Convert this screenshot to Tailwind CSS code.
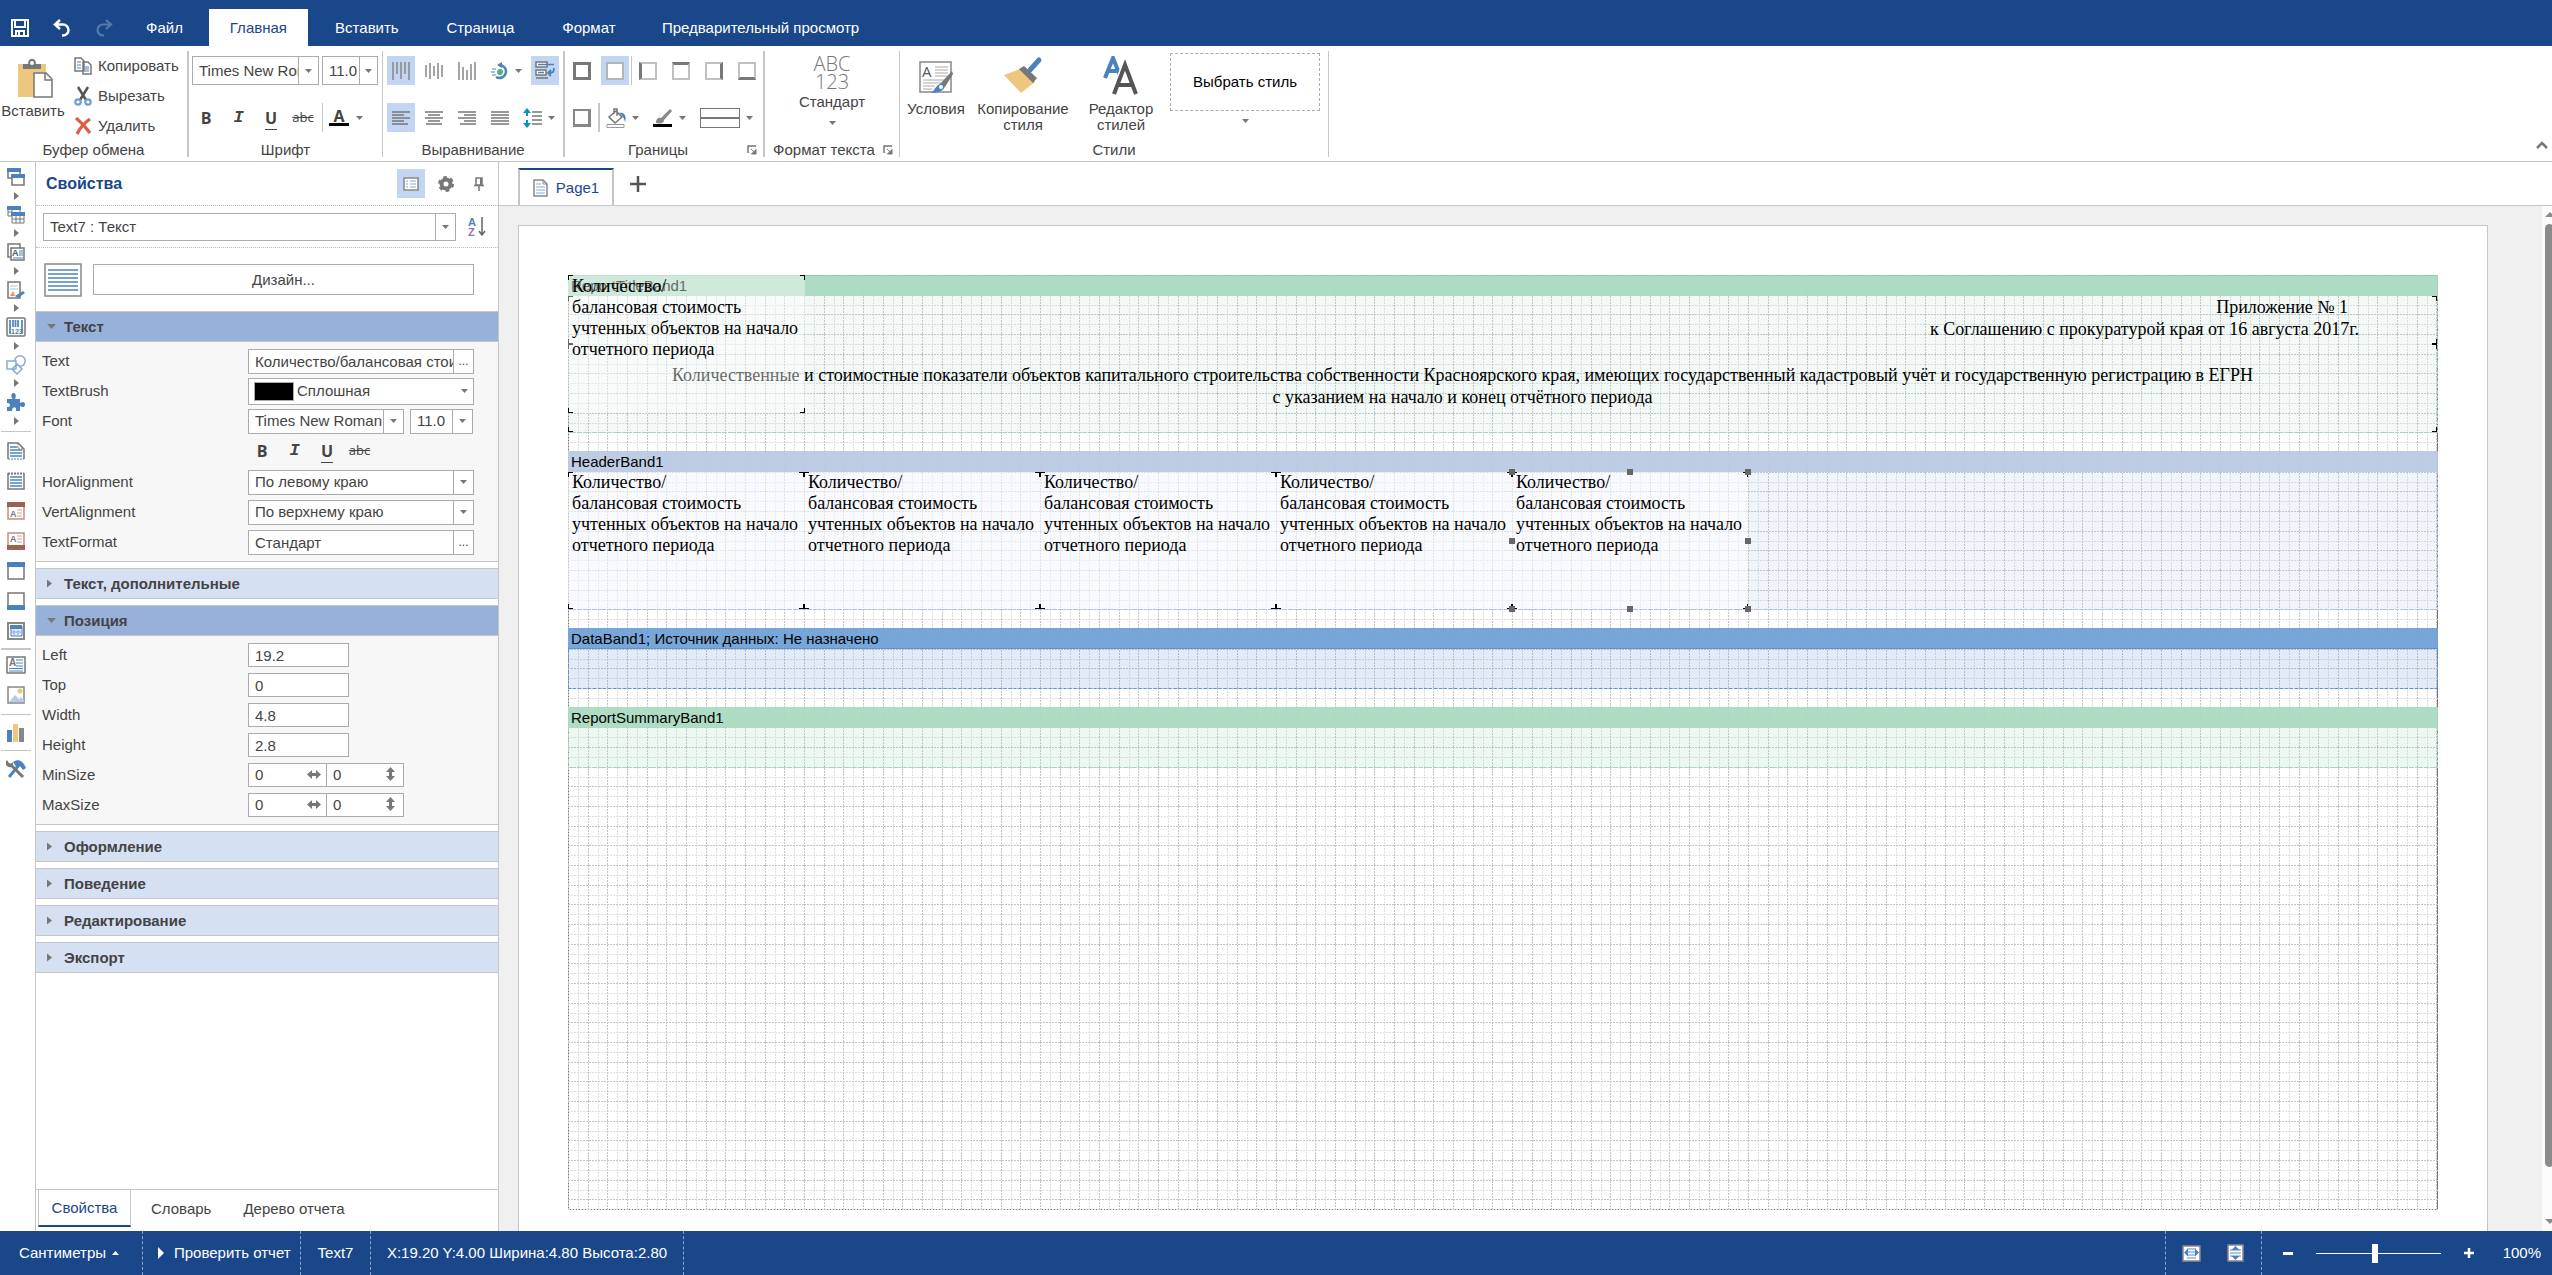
<!DOCTYPE html>
<html lang="ru">

<head>
  <meta charset="UTF-8" />
  <meta name="viewport" content="width=device-width, initial-scale=1.0" />
  <title>Дизайнер отчетов</title>
  <script src="https://cdn.jsdelivr.net/npm/@tailwindcss/browser@4"></script>
</head>

<body class="h-screen flex flex-col overflow-hidden bg-white text-[15px] leading-4 text-[#444444] font-['Liberation_Sans',Arial,sans-serif]">

  <!-- Shared icons -->
  <svg class="hidden">
    <symbol id="down" viewBox="0 0 7 4"><path d="M0 0h7L3.500 4z" fill="#777" /></symbol>
    <symbol id="right" viewBox="0 0 5 8"><path d="M0 0l5 4-5 4z" fill="#777" /></symbol>
    <symbol id="launcher" viewBox="0 0 10 10"><path d="M1 8V1h8" fill="none" stroke="#777" stroke-width="1.500" /><path d="M4 4l4 4M9 4.500V9H4.500z" fill="#777" stroke="#777" /></symbol>
    <symbol id="hsize" viewBox="0 0 14 9"><path d="M0 4.500L5 0v3h4V0l5 4.500L9 9V6H5v3z" fill="#777" /></symbol>
    <symbol id="vsize" viewBox="0 0 9 14"><path d="M4.500 0L9 5H6v4h3l-4.500 5L0 9h3V5H0z" fill="#777" /></symbol>
  </svg>

  <!-- Menu bar -->
  <header class="bg-[#1a478a] text-white flex h-[46px] pt-[9px] pl-[11px] shrink-0">
    <div class="flex items-center gap-6 w-[115px]">
      <button aria-label="Сохранить"><svg class="size-[18px]" viewBox="0 0 18 18"><path d="M1 1h16v16H1zM4 1v7h10V1M5 17v-5h8v5" fill="none" stroke="#fff" stroke-width="2" /><path d="M7 13h2v4H7z" fill="#fff" /></svg></button>
      <button aria-label="Отменить"><svg class="size-[18px]" viewBox="0 0 18 18"><path d="M7 1L2 5.500 7 10M2 5.500h8a5 5 0 010 11H9" fill="none" stroke="#fff" stroke-width="2.500" /></svg></button>
      <button aria-label="Повторить"><svg class="size-[18px]" viewBox="0 0 18 18"><path d="M11 1l5 4.500L11 10M16 5.500H8a5 5 0 000 11h1" fill="none" stroke="#5579ab" stroke-width="2.200" /></svg></button>
    </div>
    <nav class="flex">
      <a href="#" class="px-5 flex items-center">Файл</a>
      <a href="#" class="w-[99px] ml-[6px] mr-[5px] justify-center bg-white text-[#1a478a] flex items-center">Главная</a>
      <a href="#" class="w-[108px] justify-center flex items-center">Вставить</a>
      <a href="#" class="w-[119px] justify-center flex items-center">Страница</a>
      <a href="#" class="w-[98px] justify-center flex items-center">Формат</a>
      <a href="#" class="px-6 flex items-center">Предварительный просмотр</a>
    </nav>
  </header>

  <!-- Ribbon -->
  <section class="flex h-[116px] shrink-0 border-b border-[#c6c6c6] pt-[5px] pb-1">
    <!-- Clipboard -->
    <div class="w-[189px] border-r-2 border-[#c6c6c6] flex flex-col">
      <div class="flex flex-1">
        <button class="w-[66px] flex flex-col items-center pt-[7px] gap-[5px]">
          <svg class="w-9 h-10 ml-1" viewBox="0 0 36 40"><path d="M1 6h28v33H1z" fill="#eec77e" /><path d="M6 11V6h5c0-7 8-7 8 0h5v5z" fill="#777" /><circle cx="15" cy="5" r="2" fill="#fff" /><path d="M17 15h12l6 6v18H17z" fill="#fff" stroke="#777" stroke-width="1.500" /><path d="M28 15v7h7" fill="none" stroke="#777" stroke-width="1.500" /></svg>
          Вставить
        </button>
        <div class="flex flex-col pl-2 [&>button]:h-[30px]">
          <button class="flex items-center gap-[6px]">
            <svg class="size-[18px]" viewBox="0 0 18 18"><path d="M1 1h6l3 3v10H1zM9 5h5l3 3v9H9z" fill="#fff" stroke="#777" stroke-width="1.500" /><path d="M3 5h4M3 8h4M3 11h4M11 10h4M11 12h4M11 14h4" stroke="#4c82bb" stroke-width="1.200" /></svg>
            Копировать
          </button>
          <button class="flex items-center gap-[6px]">
            <svg class="w-[18px] h-5" viewBox="0 0 18 20"><path d="M4 1l8 13M14 1L6 14" stroke="#555" stroke-width="2.500" /><circle cx="4" cy="16" r="2.700" fill="none" stroke="#6f9dd0" stroke-width="2.200" /><circle cx="14" cy="16" r="2.700" fill="none" stroke="#6f9dd0" stroke-width="2.200" /></svg>
            Вырезать
          </button>
          <button class="flex items-center gap-[6px]">
            <svg class="size-[18px]" viewBox="0 0 18 18"><path d="M2 1c5 4 9 8 14 15M16 2C10 6 6 11 3 17" fill="none" stroke="#da5f43" stroke-width="3.200" /></svg>
            Удалить
          </button>
        </div>
      </div>
      <div class="text-center h-[14px] leading-[14px]">Буфер обмена</div>
    </div>

    <!-- Font -->
    <div class="w-[194px] border-r border-[#c6c6c6] flex flex-col">
      <div class="flex-1 pt-[5px] pl-[3px] flex flex-col gap-[18px]">
        <div class="flex gap-[3px]">
          <div class="flex w-[127px] h-[29px] border border-[#ababab]">
            <select aria-label="Шрифт" class="appearance-none w-[105px] pl-[6px] text-clip overflow-hidden"><option>Times New Roman</option></select>
            <span class="flex-1 border-l border-[#ababab] grid place-items-center"><svg class="w-[7px] h-1"><use href="#down" /></svg></span>
          </div>
          <div class="flex w-14 h-[29px] border border-[#ababab]">
            <select aria-label="Размер шрифта" class="appearance-none w-[36px] pl-[6px]"><option>11.0</option></select>
            <span class="flex-1 border-l border-[#ababab] grid place-items-center"><svg class="w-[7px] h-1"><use href="#down" /></svg></span>
          </div>
        </div>
        <div class="flex h-[29px] items-center font-['Open_Sans',sans-serif] text-base">
          <button class="w-7 font-bold">B</button>
          <button class="w-[37px] italic font-bold font-['Liberation_Mono',monospace] text-[17px]">I</button>
          <button class="w-7 font-bold"><span class="border-b border-[#444]">U</span></button>
          <button class="w-[36px] text-[13px] line-through">abc</button>
          <span class="w-px h-full bg-[#c6c6c6] ml-px"></span>
          <button class="flex items-center gap-[7px] ml-[6px]" aria-label="Цвет текста">
            <span class="w-5 h-4 border-b-3 border-black font-bold leading-[13px]">A</span>
            <svg class="w-[7px] h-1"><use href="#down" /></svg>
          </button>
        </div>
      </div>
      <div class="text-center h-[14px] leading-[14px]">Шрифт</div>
    </div>

    <!-- Alignment -->
    <div class="w-[182px] border-r-2 border-[#c6c6c6] flex flex-col">
      <div class="flex-1 pt-[5px] pl-1 flex flex-col gap-[18px] [&_button]:h-[29px] [&_button]:w-7 [&_button]:grid [&_button]:place-items-center">
        <div class="flex items-center gap-[5px]">
          <button class="bg-[#c2d5f2]" aria-label="По верхнему краю"><svg class="size-[18px]" viewBox="0 0 18 18"><path d="M1 0v18M5 0v12M9 0v17M13 0v12M17 0v18" stroke="#888" stroke-width="1.500" /></svg></button>
          <button aria-label="По середине"><svg class="size-[18px]" viewBox="0 0 18 18"><path d="M1 3v12M5 1v16M9 4v10M13 1v16M17 3v12" stroke="#888" stroke-width="1.500" /></svg></button>
          <button aria-label="По нижнему краю"><svg class="size-[18px]" viewBox="0 0 18 18"><path d="M1 0v18M5 5v13M9 8v10M13 2v16M17 0v18" stroke="#888" stroke-width="1.500" /></svg></button>
          <button aria-label="Угол"><svg class="size-[18px]" viewBox="0 0 18 18"><path d="M8 3a6.500 6.500 0 11-3 12" fill="none" stroke="#4c82bb" stroke-width="2.500" /><path d="M6 3l5-3v6z" fill="#4c82bb" /><circle cx="9" cy="10" r="3" fill="#53ae8a" /><path d="M1 7h4M0 10h4M1 13h4" stroke="#4c82bb" /></svg></button>
          <svg class="w-[7px] h-1 -ml-1"><use href="#down" /></svg>
          <button class="bg-[#c2d5f2] ml-1" aria-label="Перенос слов"><svg class="size-5" viewBox="0 0 20 20"><path d="M1 1h11v5H1zM1 9h10v5H1zM1 17h12" fill="#fff" stroke="#777" stroke-width="1.500" /><path d="M3 3.500h16M3 11.500h6" stroke="#4c82bb" stroke-width="1.500" /><path d="M19 7c0 4-1 5-6 5M16 9l-3 3 3 3" fill="none" stroke="#4c82bb" stroke-width="1.800" /></svg></button>
        </div>
        <div class="flex items-center gap-[5px]">
          <button class="bg-[#c2d5f2]" aria-label="Влево"><svg class="w-[18px] h-[14px]" viewBox="0 0 18 14"><path d="M0 1h18M0 4h12M0 7h18M0 10h12M0 13h16" stroke="#777" stroke-width="1.300" /></svg></button>
          <button aria-label="По центру"><svg class="w-[18px] h-[14px]" viewBox="0 0 18 14"><path d="M0 1h18M3 4h12M0 7h18M3 10h12M1 13h16" stroke="#777" stroke-width="1.300" /></svg></button>
          <button aria-label="Вправо"><svg class="w-[18px] h-[14px]" viewBox="0 0 18 14"><path d="M0 1h18M6 4h12M0 7h18M6 10h12M2 13h16" stroke="#777" stroke-width="1.300" /></svg></button>
          <button aria-label="По ширине"><svg class="w-[18px] h-[14px]" viewBox="0 0 18 14"><path d="M0 1h18M0 4h18M0 7h18M0 10h18M0 13h18" stroke="#777" stroke-width="1.300" /></svg></button>
          <button aria-label="Интервал"><svg class="size-5" viewBox="0 0 20 20"><path d="M4 4v4M4 12v4" stroke="#148cbc" stroke-width="2" /><path d="M0 5l4-5 4 5zM0 15l4 5 4-5z" fill="#148cbc" /><path d="M9 4h10M9 8h10M9 12h10M9 16h10" stroke="#777" stroke-width="1.300" /></svg></button>
          <svg class="w-[7px] h-1 -ml-1"><use href="#down" /></svg>
        </div>
      </div>
      <div class="text-center h-[14px] leading-[14px]">Выравнивание</div>
    </div>

    <!-- Borders -->
    <div class="w-[200px] border-r-2 border-[#c6c6c6] flex flex-col">
      <div class="flex-1 pt-[5px] pl-[3px] flex flex-col gap-[18px] [&_button]:h-[29px] [&_button]:min-w-7 [&_button]:grid [&_button]:place-items-center">
        <div class="flex items-center gap-[5px]">
          <button aria-label="Все границы"><span class="size-[18px] border-3 border-[#777]"></span></button>
          <button class="bg-[#c2d5f2]" aria-label="Без границ"><span class="size-[18px] border-2 border-[#b5b5b5] bg-white"></span></button>
          <span class="w-px h-[29px] bg-[#c6c6c6] -mx-[3px]"></span>
          <button aria-label="Левая граница"><span class="size-[18px] border-2 border-[#c0c0c0] border-l-3 border-l-[#777]"></span></button>
          <button aria-label="Верхняя граница"><span class="size-[18px] border-2 border-[#c0c0c0] border-t-3 border-t-[#777]"></span></button>
          <button aria-label="Правая граница"><span class="size-[18px] border-2 border-[#c0c0c0] border-r-3 border-r-[#777]"></span></button>
          <button aria-label="Нижняя граница"><span class="size-[18px] border-2 border-[#c0c0c0] border-b-3 border-b-[#777]"></span></button>
        </div>
        <div class="flex items-center">
          <button aria-label="Тень"><span class="size-[18px] border-2 border-[#888] border-r-3 border-b-3"></span></button>
          <span class="w-[2px] h-[29px] bg-[#c6c6c6] mx-[2px]"></span>
          <button aria-label="Заливка"><svg class="size-5" viewBox="0 0 20 20"><path d="M3 9l7-6 6 6-7 6zM8 6V1h3v7" fill="#fff" stroke="#777" stroke-width="1.500" /><path d="M13 5c5-1 8 3 6 9-1-4-2-6-6-9z" fill="#4c82bb" /><path d="M1 16.500h17v3H1z" fill="#fff" stroke="#999" /></svg></button>
          <svg class="w-[7px] h-1 ml-[2px]"><use href="#down" /></svg>
          <button class="ml-[10px]" aria-label="Цвет границы"><svg class="size-5" viewBox="0 0 20 20"><path d="M3 15c0-5 3-6 5-5l9-9 2 2-8 9c0 3-3 4-8 3z" fill="#888" /><path d="M0 16h19v3H0z" fill="#000" /></svg></button>
          <svg class="w-[7px] h-1 ml-[2px]"><use href="#down" /></svg>
          <button class="ml-[14px]" aria-label="Стиль границы"><span class="w-10 h-5 border border-[#777] grid items-center"><span class="h-[2px] bg-[#777]"></span></span></button>
          <svg class="w-[7px] h-1 ml-[6px]"><use href="#down" /></svg>
        </div>
      </div>
      <div class="flex items-center h-[14px]"><span class="flex-1 pl-1 text-center">Границы</span><svg class="size-[10px] mr-[6px]"><use href="#launcher" /></svg></div>
    </div>

    <!-- Text format -->
    <div class="w-[135px] border-r border-[#c6c6c6] flex flex-col">
      <button class="flex-1 flex flex-col items-center pt-1">
        <span class="font-['Open_Sans','Noto_Sans',sans-serif] font-light text-xl leading-[18px] text-[#777]">ABC<br>123</span>
        <span class="mt-[3px]">Стандарт</span>
        <svg class="w-[7px] h-1 mt-[11px]"><use href="#down" /></svg>
      </button>
      <div class="flex items-center h-[14px]"><span class="flex-1 text-center">Формат текста</span><svg class="size-[10px] mr-[6px]"><use href="#launcher" /></svg></div>
    </div>

    <!-- Styles -->
    <div class="w-[429px] border-r border-[#c6c6c6] flex flex-col">
      <div class="flex-1 flex items-start">
        <button class="w-[72px] flex flex-col items-center pt-[5px] gap-[5px]">
          <svg class="size-10" viewBox="0 0 40 40"><path d="M4 6h31v30H4z" fill="#fff" stroke="#888" stroke-width="1.500" /><text x="6" y="21" font-size="15" font-family="Open Sans" fill="#555">A</text><path d="M19 11h13M19 14h13M19 17h13M19 20h13M7 24h25M7 27h18M7 30h12M7 33h9" stroke="#aaa" /><path d="M24 28L36 15l1 3-8 13z" fill="#777" /><path d="M28 28c3 5-4 9-13 9 5-4 6-11 13-9z" fill="#4c82bb" /><circle cx="25" cy="31" r="2" fill="#fff" /></svg>
          Условия
        </button>
        <button class="w-[102px] flex flex-col items-center pt-[5px] gap-[5px]">
          <svg class="size-10" viewBox="0 0 40 40"><path d="M1 19l16-6 15 13-14 11z" fill="#eec77e" /><path d="M16 13l5-3 13 12-4 5z" fill="#777" /><path d="M27 14l9-10" stroke="#4c82bb" stroke-width="5" stroke-linecap="round" /></svg>
          <span>Копирование<br>стиля</span>
        </button>
        <button class="w-[94px] flex flex-col items-center pt-[5px] gap-[5px]">
          <svg class="size-10" viewBox="0 0 40 40"><path d="M4 22L12 2l8 20M7 15h10" fill="none" stroke="#4c82bb" stroke-width="4" /><path d="M13 38L24 9l11 29M17 29h14" fill="none" stroke="#fff" stroke-width="7" /><path d="M13 38L24 9l11 29M17 29h14" fill="none" stroke="#555" stroke-width="4" /></svg>
          <span>Редактор<br>стилей</span>
        </button>
        <button class="w-[150px] ml-[2px] mt-[2px] flex flex-col items-center text-black">
          <span class="w-full h-[58px] border border-dashed border-[#ababab] grid place-items-center">Выбрать стиль</span>
          <svg class="w-[7px] h-1 mt-2"><use href="#down" /></svg>
        </button>
      </div>
      <div class="text-center h-[14px] leading-[14px]">Стили</div>
    </div>
    <button class="ml-auto self-end mr-1 mb-2" aria-label="Свернуть ленту"><svg class="w-3 h-2" viewBox="0 0 12 8"><path d="M1 7l5-5 5 5" fill="none" stroke="#777" stroke-width="2.500" /></svg></button>
  </section>

  <div class="flex flex-1 min-h-0">
    <!-- Toolbox -->
    <aside class="w-[35px] shrink-0 flex flex-col items-start pl-1 pt-[5px]">
      <div class="flex flex-col items-center justify-between h-[258px] w-6 [&>button]:h-5">
        <button aria-label="Бэнды"><svg class="size-[18px]" viewBox="0 0 18 18"><path d="M1 1h12v9H1z" fill="#fff" stroke="#777" stroke-width="1.500" /><path d="M0 0h14v4H0z" fill="#4c82bb" /><path d="M5 7h12v10H5z" fill="#fff" stroke="#777" stroke-width="1.500" /><path d="M4 6h14v4H4z" fill="#4c82bb" /></svg></button>
        <svg class="w-[5px] h-2"><use href="#right" /></svg>
        <button aria-label="Перекрестные бэнды"><svg class="size-[18px]" viewBox="0 0 18 18"><path d="M1 1h12v9H1zM5 1v9M1 6h4" fill="#fff" stroke="#777" /><path d="M0 0h14v4H0z" fill="#4c82bb" /><path d="M5 7h12v10H5zM9 7v10M13 7v10M5 13h12" fill="#fff" stroke="#777" /><path d="M4 6h14v4H4z" fill="#4c82bb" /></svg></button>
        <svg class="w-[5px] h-2"><use href="#right" /></svg>
        <button aria-label="Компоненты"><svg class="size-[18px]" viewBox="0 0 18 18"><path d="M1 1h12v13H1z" fill="#fff" stroke="#777" stroke-width="1.500" /><path d="M4 5h13v12H4z" fill="#fff" stroke="#777" stroke-width="1.500" /><text x="5" y="13" font-size="9" font-weight="bold" fill="#555">A</text><path d="M12 8h4M12 10h4M12 12h4M6 15h10" stroke="#4c82bb" /></svg></button>
        <svg class="w-[5px] h-2"><use href="#right" /></svg>
        <button aria-label="Подпись"><svg class="size-[18px]" viewBox="0 0 18 18"><path d="M1 1h12v16H1z" fill="#fff" stroke="#777" stroke-width="1.500" /><path d="M3 5h8M3 8h8" stroke="#a9c5e5" /><path d="M3 15l3-5 2 5z" fill="#e8935c" /><path d="M8 15l8-5 2 2-7 5z" fill="#4c82bb" /></svg></button>
        <svg class="w-[5px] h-2"><use href="#right" /></svg>
        <button aria-label="Штрих-коды"><svg class="size-[20px]" viewBox="0 0 20 20"><rect x="1" y="1" width="18" height="18" rx="1" fill="#fff" stroke="#777" stroke-width="1.500" /><path d="M4 3v14M7 3v7M9.500 3v7M12 3v7M16 3v14" stroke="#4c82bb" stroke-width="1.700" /><text x="5" y="17" font-size="7" font-weight="bold" fill="#4c82bb">123</text></svg></button>
        <svg class="w-[5px] h-2"><use href="#right" /></svg>
        <button aria-label="Фигуры"><svg class="size-[20px]" viewBox="0 0 20 20"><g fill="#fff" stroke="#86abd6" stroke-width="1.500"><circle cx="14" cy="6" r="5.200" /><path d="M1 6h9v8H1zM11 9l5 5-5 5-5-5z" /></g></svg></button>
        <svg class="w-[5px] h-2"><use href="#right" /></svg>
        <button aria-label="Расширения"><svg class="size-[18px]" viewBox="0 0 18 18"><path d="M0 6h5.500C3 2 5 0 6.500 0S10 2 8 6h5v4c3-2 5-1 5 1.500S16 15 13 13v5H9c1-5-4-5-4 0H0v-4c4 1 4-5 0-4z" fill="#4c82bb" /></svg></button>
        <svg class="w-[5px] h-2"><use href="#right" /></svg>
      </div>
      <hr class="w-[30px] -ml-[3px] border-[#c6c6c6] mt-[6px] mb-1" />
      <div class="flex flex-col items-center w-6 [&>button]:h-[30px]">
        <button aria-label="Заголовок отчета"><svg class="size-[18px]" viewBox="0 0 18 18"><path d="M1 17V1h10l6 6v10" fill="#fff" stroke="#777" stroke-width="1.500" /><path d="M11 1v6h6M1 17h16" fill="none" stroke="#777" stroke-dasharray="2 1" /><path d="M3 5h7M3 8h12M3 11h12M3 14h12" stroke="#4c82bb" stroke-width="1.500" /></svg></button>
        <button aria-label="Итог отчета"><svg class="size-[18px]" viewBox="0 0 18 18"><path d="M1 1v16h16V1" fill="#fff" stroke="#777" stroke-width="1.500" /><path d="M1 1.500h16" stroke="#777" stroke-width="2" stroke-dasharray="2 1" /><path d="M3 5h12M3 8h12M3 11h12M3 14h12" stroke="#4c82bb" stroke-width="1.500" /></svg></button>
        <button aria-label="Заголовок страницы"><svg class="size-[18px]" viewBox="0 0 18 18"><path d="M1 1h16v16H1z" fill="#fff" stroke="#c38f80" stroke-width="1.500" /><path d="M0 0h18v5H0z" fill="#a06250" /><text x="3" y="15" font-size="9" font-weight="bold" fill="#777">A</text><path d="M10 8h5M10 11h5M10 14h5" stroke="#d0a598" /></svg></button>
        <button aria-label="Итог страницы"><svg class="size-[18px]" viewBox="0 0 18 18"><path d="M1 1h16v16H1z" fill="#fff" stroke="#c38f80" stroke-width="1.500" /><path d="M0 13h18v5H0z" fill="#a06250" /><text x="3" y="10" font-size="9" font-weight="bold" fill="#777">A</text><path d="M10 4h5M10 7h5M10 10h5" stroke="#d0a598" /></svg></button>
        <button aria-label="Заголовок"><svg class="size-[18px]" viewBox="0 0 18 18"><path d="M1 1h16v16H1z" fill="#fff" stroke="#777" stroke-width="1.500" /><path d="M0 0h18v5H0z" fill="#4c82bb" /></svg></button>
        <button aria-label="Итог"><svg class="size-[18px]" viewBox="0 0 18 18"><path d="M1 1h16v16H1z" fill="#fff" stroke="#777" stroke-width="1.500" /><path d="M0 13h18v5H0z" fill="#4c82bb" /></svg></button>
        <button aria-label="Данные"><svg class="size-[18px]" viewBox="0 0 18 18"><path d="M1 1h16v16H1z" fill="#fff" stroke="#888" stroke-width="2" /><path d="M4 4h11v10H4z" fill="#e4edf7" stroke="#4c82bb" /><path d="M3 3h12v4H3z" fill="#4c82bb" /><path d="M4 10h10M7 8v5M11 8v5" stroke="#86abd6" /></svg></button>
      </div>
      <hr class="w-[30px] -ml-[3px] border-[#c6c6c6] border-t-2 mt-[2px]" />
      <div class="flex flex-col items-center w-6 [&>button]:h-[30px]">
        <button aria-label="Текст"><svg class="w-5 h-[18px]" viewBox="0 0 20 18"><path d="M1 1h18v16H1z" fill="#fff" stroke="#777" stroke-width="1.500" /><text x="3" y="10" font-size="10" font-weight="bold" fill="#777">A</text><path d="M10 4h7M10 7h7M10 10h7M3 12.500h14M3 15h14" stroke="#4c82bb" /></svg></button>
        <button aria-label="Изображение"><svg class="size-[18px]" viewBox="0 0 18 18"><path d="M1 1h16v16H1z" fill="#fff" stroke="#888" stroke-width="1.500" /><circle cx="13" cy="5" r="2.500" fill="#eec77e" /><path d="M2 16l6-7 4 4 2-2 3 3v2z" fill="#b6cce6" /></svg></button>
      </div>
      <hr class="w-[30px] -ml-[3px] border-[#c6c6c6] mt-1 mb-[3px]" />
      <button class="w-6 h-[30px] grid place-items-center" aria-label="Диаграмма"><svg class="size-[18px]" viewBox="0 0 18 18"><path d="M0 6h5v12H0z" fill="#4c82bb" /><path d="M6 0h5v18H6z" fill="#eec77e" /><path d="M12 4h5v14h-5z" fill="#888" /></svg></button>
      <hr class="w-[30px] -ml-[3px] border-[#c6c6c6] mt-[2px] mb-[3px]" />
      <button class="w-6 h-[30px] grid place-items-center" aria-label="Настройка"><svg class="size-5" viewBox="0 0 20 20"><path d="M3 18L13 6" stroke="#4c82bb" stroke-width="3" /><path d="M7 3c6-4 10-1 13 6l-3 2-3-4-3 2z" fill="#4c82bb" /><path d="M4 5l13 13" stroke="#777" stroke-width="3" /><path d="M1 1a4 4 0 106 6L7 3 5 5 3 4z" fill="#777" /></svg></button>
    </aside>

    <!-- Properties panel -->
    <section class="w-[464px] shrink-0 border-x border-[#c6c6c6] flex flex-col">
      <div class="h-[44px] flex items-center pl-[10px] pr-[10px] border-b border-dotted border-[#bbb]">
        <h2 class="font-bold text-base text-[#1a478a] flex-1">Свойства</h2>
        <button class="w-7 h-[29px] bg-[#c2d5f2] grid place-items-center" aria-label="Вид"><svg class="w-4 h-[14px]" viewBox="0 0 16 14"><path d="M1 1h14v12H1z" fill="#fff" stroke="#888" stroke-width="1.500" /><path d="M3 4h2M3 7h2M3 10h2M7 4h6M7 7h6M7 10h6" stroke="#86abd6" /></svg></button>
        <button class="ml-[13px]" aria-label="Настройки"><svg class="size-4" viewBox="0 0 16 16"><circle cx="8" cy="8" r="4.500" fill="none" stroke="#777" stroke-width="4" /><circle cx="8" cy="8" r="6.500" fill="none" stroke="#777" stroke-width="3" stroke-dasharray="3.400 3.400" /></svg></button>
        <button class="ml-5 mr-1" aria-label="Закрепить"><svg class="w-[10px] h-[14px]" viewBox="0 0 10 14"><path d="M2 1h6v7H2zM0 8.500h10M5 9v5" fill="none" stroke="#777" stroke-width="1.500" /><path d="M7 1v7" stroke="#777" stroke-width="2" /></svg></button>
      </div>
      <div class="h-[42px] flex items-center pl-[7px] border-b border-dotted border-[#bbb]">
        <div class="flex w-[413px] h-7 border border-[#ababab]">
          <select aria-label="Компонент" class="appearance-none flex-1 pl-[6px]"><option>Text7 : Текст</option></select>
          <span class="w-5 border-l border-[#ababab] grid place-items-center"><svg class="w-[7px] h-1"><use href="#down" /></svg></span>
        </div>
        <button class="ml-3" aria-label="Сортировка"><svg class="w-[18px] h-5" viewBox="0 0 18 20"><text x="0" y="9" font-size="11" font-weight="bold" fill="#4c82bb">A</text><text x="0" y="19" font-size="11" font-weight="bold" fill="#9b6fc0">Z</text><path d="M14 0v17M11 14l3 4 3-4" fill="none" stroke="#666" stroke-width="1.500" /></svg></button>
      </div>
      <div class="flex items-center h-[63px] pl-2 gap-[11px]">
        <svg class="w-[38px] h-[34px]" viewBox="0 0 38 34"><path d="M1 1h36v32H1z" fill="#fff" stroke="#888" stroke-width="1.500" /><path d="M4 7h30M4 11h30M4 15h30M4 19h30M4 23h30M4 27h30" stroke="#4c82bb" stroke-width="1.400" /></svg>
        <button class="w-[381px] h-[31px] border border-[#ababab]">Дизайн...</button>
      </div>

      <div class="flex flex-col flex-1 [&_h3]:font-bold [&_h3]:h-[31px] [&_h3]:border-y [&_h3]:border-[#c6c6c6] [&_h3]:flex [&_h3]:items-center [&_h3]:pl-[11px] [&_label]:w-[206px] [&_label]:shrink-0">
        <h3 class="bg-[#98b1db]"><svg class="w-[9px] h-[5px] mr-2"><use href="#down" /></svg>Текст</h3>
        <div class="bg-[#f7f7f7] border-b border-[#c6c6c6] py-1 pl-[6px] [&>div]:h-[30px] [&>div]:flex [&>div]:items-center">
          <div>
            <label for="p-text">Text</label>
            <input id="p-text" value="Количество/балансовая стоимость учтенных объектов на начало отчетного периода" class="w-[206px] h-[25px] bg-white border border-[#ababab] pl-[6px]" />
            <button class="w-5 h-[25px] bg-white border border-l-0 border-[#ababab] text-xs">...</button>
          </div>
          <div>
            <label for="p-brush">TextBrush</label>
            <div class="flex items-center w-[226px] h-[27px] bg-white border border-[#ababab] pl-[5px] pr-[5px]">
              <span class="w-10 h-[19px] bg-black border border-[#ababab]"></span>
              <select id="p-brush" class="appearance-none flex-1 pl-[3px]"><option>Сплошная</option></select>
              <svg class="w-[7px] h-1"><use href="#down" /></svg>
            </div>
          </div>
          <div>
            <label for="p-font">Font</label>
            <div class="flex w-[156px] h-[25px] bg-white border border-[#ababab]">
              <select id="p-font" class="appearance-none flex-1 pl-[6px]"><option>Times New Roman</option></select>
              <span class="w-5 border-l border-[#ababab] grid place-items-center"><svg class="w-[7px] h-1"><use href="#down" /></svg></span>
            </div>
            <div class="flex w-[63px] h-[25px] bg-white border border-[#ababab] ml-[6px]">
              <select aria-label="Размер" class="appearance-none flex-1 w-10 pl-[6px]"><option>11.0</option></select>
              <span class="w-5 border-l border-[#ababab] grid place-items-center"><svg class="w-[7px] h-1"><use href="#down" /></svg></span>
            </div>
          </div>
          <div class="pl-[206px] font-['Open_Sans',sans-serif] text-base">
            <button class="w-7 font-bold">B</button>
            <button class="w-[37px] italic font-bold font-['Liberation_Mono',monospace] text-[17px]">I</button>
            <button class="w-7 font-bold"><span class="border-b border-[#444]">U</span></button>
            <button class="w-[37px] text-[13px] line-through">abc</button>
          </div>
          <div class="mt-px">
            <label for="p-hor">HorAlignment</label>
            <div class="flex w-[226px] h-[25px] bg-white border border-[#ababab]">
              <select id="p-hor" class="appearance-none flex-1 pl-[6px]"><option>По левому краю</option></select>
              <span class="w-5 border-l border-[#ababab] grid place-items-center"><svg class="w-[7px] h-1"><use href="#down" /></svg></span>
            </div>
          </div>
          <div>
            <label for="p-vert">VertAlignment</label>
            <div class="flex w-[226px] h-[25px] bg-white border border-[#ababab]">
              <select id="p-vert" class="appearance-none flex-1 pl-[6px]"><option>По верхнему краю</option></select>
              <span class="w-5 border-l border-[#ababab] grid place-items-center"><svg class="w-[7px] h-1"><use href="#down" /></svg></span>
            </div>
          </div>
          <div>
            <label for="p-format">TextFormat</label>
            <input id="p-format" value="Стандарт" class="w-[206px] h-[25px] bg-white border border-[#ababab] pl-[6px]" />
            <button class="w-5 h-[25px] bg-white border border-l-0 border-[#ababab] text-xs">...</button>
          </div>
        </div>

        <h3 class="bg-[#d5e0f2] mt-[6px]"><svg class="w-[5px] h-[9px] mr-3"><use href="#right" /></svg>Текст, дополнительные</h3>
        <h3 class="bg-[#98b1db] mt-[6px]"><svg class="w-[9px] h-[5px] mr-2"><use href="#down" /></svg>Позиция</h3>
        <div class="bg-[#f7f7f7] border-b border-[#c6c6c6] py-1 pl-[6px] [&>div]:h-[30px] [&>div]:flex [&>div]:items-center">
          <div><label for="p-left">Left</label><input id="p-left" value="19.2" class="w-[101px] h-6 bg-white border border-[#ababab] pl-[6px]" /></div>
          <div><label for="p-top">Top</label><input id="p-top" value="0" class="w-[101px] h-6 bg-white border border-[#ababab] pl-[6px]" /></div>
          <div><label for="p-width">Width</label><input id="p-width" value="4.8" class="w-[101px] h-6 bg-white border border-[#ababab] pl-[6px]" /></div>
          <div><label for="p-height">Height</label><input id="p-height" value="2.8" class="w-[101px] h-6 bg-white border border-[#ababab] pl-[6px]" /></div>
          <div>
            <label for="p-min">MinSize</label>
            <div class="flex h-6 bg-white border border-[#ababab]">
              <input id="p-min" value="0" class="w-[58px] pl-[6px]" /><svg class="w-[14px] h-[9px] mt-[6px] mr-[5px]"><use href="#hsize" /></svg>
              <input aria-label="MinSize высота" value="0" class="w-[60px] pl-[6px] border-l border-[#ababab]" /><svg class="w-[9px] h-[14px] mt-[3px] mr-2"><use href="#vsize" /></svg>
            </div>
          </div>
          <div>
            <label for="p-max">MaxSize</label>
            <div class="flex h-6 bg-white border border-[#ababab]">
              <input id="p-max" value="0" class="w-[58px] pl-[6px]" /><svg class="w-[14px] h-[9px] mt-[6px] mr-[5px]"><use href="#hsize" /></svg>
              <input aria-label="MaxSize высота" value="0" class="w-[60px] pl-[6px] border-l border-[#ababab]" /><svg class="w-[9px] h-[14px] mt-[3px] mr-2"><use href="#vsize" /></svg>
            </div>
          </div>
        </div>

        <h3 class="bg-[#d5e0f2] mt-[6px]"><svg class="w-[5px] h-[9px] mr-3"><use href="#right" /></svg>Оформление</h3>
        <h3 class="bg-[#d5e0f2] mt-[6px]"><svg class="w-[5px] h-[9px] mr-3"><use href="#right" /></svg>Поведение</h3>
        <h3 class="bg-[#d5e0f2] mt-[6px]"><svg class="w-[5px] h-[9px] mr-3"><use href="#right" /></svg>Редактирование</h3>
        <h3 class="bg-[#d5e0f2] mt-[6px]"><svg class="w-[5px] h-[9px] mr-3"><use href="#right" /></svg>Экспорт</h3>
      </div>

      <nav class="flex h-[42px] border-t border-[#c6c6c6] pl-[2px] pb-1">
        <a href="#" class="w-[93px] border-x border-x-[#c6c6c6] border-b-2 border-b-[#1a478a] text-[#1a478a] grid place-items-center">Свойства</a>
        <a href="#" class="px-5 grid place-items-center">Словарь</a>
        <a href="#" class="px-3 grid place-items-center">Дерево отчета</a>
      </nav>
    </section>

    <!-- Designer -->
    <main class="flex-1 min-w-0 flex flex-col">
      <div class="h-11 shrink-0 border-b border-[#c6c6c6] flex pt-[6px] pl-[19px]">
        <a href="#" class="w-24 border-x-2 border-x-[#c6c6c6] border-t-2 border-t-[#1a478a] text-[#1a478a] flex items-center justify-center gap-2">
          <svg class="w-[15px] h-[18px]" viewBox="0 0 15 18"><path d="M1 1h9l4 4v12H1z" fill="#fff" stroke="#888" stroke-width="1.500" /><path d="M10 1v4h4" fill="none" stroke="#888" /><path d="M3 5h5M3 8h9M3 11h9M3 14h9" stroke="#86abd6" /></svg>
          Page1
        </a>
        <button class="ml-4 mb-[6px]" aria-label="Новая страница"><svg class="size-4" viewBox="0 0 16 16"><path d="M8 0v16M0 8h16" stroke="#555" stroke-width="2.500" /></svg></button>
      </div>
      <div class="flex-1 min-h-0 flex bg-[#f0f0f0]">
        <div class="flex-1 overflow-hidden pt-[19px] pl-[19px] pr-[54px]">
          <div class="bg-white border border-[#c6c6c6] p-[49px]">
            <div class="relative w-full aspect-[2/1] ring-1 ring-inset ring-[#777] flex flex-col gap-[18px] text-[18px] leading-[22px] text-black font-['Liberation_Serif','Times_New_Roman',serif]">
              <svg class="absolute inset-0 size-full">
                <defs>
                  <pattern id="grid" width="59" height="59" patternUnits="userSpaceOnUse" shape-rendering="crispEdges">
                    <g stroke="#dedede" stroke-dasharray="2 1"><path d="M10.500 0v59M30.500 0v59M49.500 0v59M0 10.500h59M0 30.500h59M0 49.500h59" /></g>
                    <g stroke="#c4c4c4" stroke-dasharray="2 1"><path d="M.5 0v59M20.500 0v59M39.500 0v59M0 .5h59M0 20.500h59M0 39.500h59" /></g>
                  </pattern>
                </defs>
                <rect width="100%" height="100%" fill="url(#grid)" />
              </svg>

              <div class="relative">
                <div class="h-[21px] bg-[#abdac1]/95 border-t border-[#98c9ae] pl-[3px] text-[15px] leading-5 font-['Liberation_Sans',Arial,sans-serif]">ReportTitleBand1</div>
                <div class="h-[137px] flex flex-col bg-[#abdac1]/15 border-b border-r border-dashed border-[#a5d5bb]">
                  <div class="relative h-12 pr-[78px] text-right" data-corners><span class="pr-[11px]">Приложение № 1</span><br>к Соглашению с прокуратурой края от 16 августа 2017г.</div>
                  <div class="relative flex-1 pr-20 pb-1 grid place-items-center text-center" data-corners><p>Количественные и стоимостные показатели объектов капитального строительства собственности Красноярского края, имеющих государственный кадастровый учёт и государственную регистрацию в ЕГРН<br>с указанием на начало и конец отчётного периода</p></div>
                </div>
                <div class="absolute left-0 top-0 w-[237px] h-[138px] bg-white/40 pl-1 leading-[21px] pt-px" data-corners>Количество/<br>балансовая стоимость<br>учтенных объектов на начало<br>отчетного периода</div>
              </div>

              <div class="relative">
                <div class="h-[21px] bg-[#bccae3]/95 pl-[3px] text-[15px] leading-[22px] font-['Liberation_Sans',Arial,sans-serif]">HeaderBand1</div>
                <div id="header-cells" class="h-[138px] flex bg-[#b4c9ea]/20 border-b border-r border-dashed border-[#afc0e0] leading-[21px]"></div>
              </div>

              <div class="relative">
                <div class="h-[21px] bg-[#74a3d7]/97 border-b border-[#5b95d0] pl-[3px] text-[15px] leading-[22px] font-['Liberation_Sans',Arial,sans-serif]">DataBand1; Источник данных: Не назначено</div>
                <div class="h-10 bg-[#749bd7]/20 border-b border-x border-dashed border-[#5b95d0]"></div>
              </div>

              <div class="relative">
                <div class="h-[21px] bg-[#abdac1]/95 pl-[3px] text-[15px] leading-[22px] font-['Liberation_Sans',Arial,sans-serif]">ReportSummaryBand1</div>
                <div class="h-10 bg-[#abdac1]/20 border-b border-x border-dashed border-[#a5d5bb]"></div>
              </div>
            </div>
          </div>
        </div>
        <div class="w-[10px] bg-[#fcfcfc] pl-[3px] overflow-hidden flex flex-col">
          <svg class="w-[10px] h-[5px] mt-[6px] mb-[7px] shrink-0" viewBox="0 0 10 5"><path d="M0 5l5-5 5 5z" fill="#8b8b8b" /></svg>
          <div class="w-[9px] flex-1 rounded-full bg-[#8b8b8b]"></div>
          <svg class="w-[10px] h-[5px] mt-[52px] mb-[7px] shrink-0" viewBox="0 0 10 5"><path d="M0 0h10L5 5z" fill="#8b8b8b" /></svg>
        </div>
      </div>
    </main>
  </div>

  <!-- Status bar -->
  <footer class="h-11 shrink-0 bg-[#1a478a] text-white flex">
    <button class="w-[143px] border-r border-dashed border-[#8ba6cf] flex items-center justify-center gap-[6px] pr-1">Сантиметры <svg class="w-[7px] h-1" viewBox="0 0 7 4"><path d="M0 4h7L3.500 0z" fill="#fff" /></svg></button>
    <button class="w-[158px] border-r border-dashed border-[#8ba6cf] flex items-center pl-[15px] gap-[10px]"><svg class="w-[6px] h-3" viewBox="0 0 6 12"><path d="M0 0l6 6-6 6z" fill="#fff" /></svg>Проверить отчет</button>
    <span class="w-[70px] border-r border-dashed border-[#8ba6cf] grid place-items-center">Text7</span>
    <span class="w-[313px] border-r border-dashed border-[#8ba6cf] grid place-items-center">X:19.20 Y:4.00 Ширина:4.80 Высота:2.80</span>
    <div class="ml-auto w-[97px] border-x border-dashed border-[#8ba6cf] flex items-center gap-[26px] pl-4">
      <button aria-label="По ширине страницы"><svg class="w-[19px] h-[17px]" viewBox="0 0 19 17"><path d="M1 1h17v15H1z" fill="#fff" stroke="#888" stroke-width="1.500" /><path d="M5 4h9M5 7h9M5 10h9M5 13h9" stroke="#a9c5e5" stroke-width="2" /><path d="M2 7.500l4-4v8zM17 7.500l-4-4v8z" fill="#4c82bb" /></svg></button>
      <button aria-label="Страница целиком"><svg class="w-[17px] h-[18px]" viewBox="0 0 17 18"><path d="M1 1h15v16H1z" fill="#fff" stroke="#888" stroke-width="1.500" /><path d="M3 6h11M3 9h11M3 12h11" stroke="#a9c5e5" stroke-width="2" /><path d="M8.500 2l4 4h-8zM8.500 16l4-4h-8z" fill="#4c82bb" /></svg></button>
    </div>
    <div class="flex items-center w-[290px] pl-[21px]">
      <button aria-label="Уменьшить" class="w-[10px] h-[3px] bg-white"></button>
      <input type="range" aria-label="Масштаб" min="0" max="100" value="47" class="appearance-none bg-transparent w-[125px] h-5 ml-[23px] mr-[23px] [&::-webkit-slider-runnable-track]:h-px [&::-webkit-slider-runnable-track]:bg-white [&::-webkit-slider-thumb]:appearance-none [&::-webkit-slider-thumb]:w-[6px] [&::-webkit-slider-thumb]:h-[19px] [&::-webkit-slider-thumb]:-mt-[9px] [&::-webkit-slider-thumb]:bg-white" />
      <button aria-label="Увеличить"><svg class="size-[10px]" viewBox="0 0 10 10"><path d="M5 0v10M0 5h10" stroke="#fff" stroke-width="2.500" /></svg></button>
      <span class="ml-auto mr-[11px]">100%</span>
    </div>
  </footer>

  <script>
    // Header band cells, the last one is selected
    const cells = document.getElementById("header-cells");
    const lines = ["Количество/", "балансовая стоимость", "учтенных объектов на начало", "отчетного периода"];
    for (let i = 0; i < 5; i++) {
      cells.innerHTML += `<div class="relative w-[236px] bg-white/50 pl-1 whitespace-nowrap" data-corners>${lines.join("<br>")}</div>`;
    }

    // Corner marks
    const corners = `
      <span class="absolute left-0 top-0 size-[5px] border-l border-t border-black"></span>
      <span class="absolute right-0 top-0 size-[5px] border-r border-t border-black"></span>
      <span class="absolute left-0 bottom-0 size-[5px] border-l border-b border-black"></span>
      <span class="absolute right-0 bottom-0 size-[5px] border-r border-b border-black"></span>`;
    document.querySelectorAll("[data-corners]").forEach((el) => el.insertAdjacentHTML("beforeend", corners));

    // Resize handles
    cells.lastElementChild.insertAdjacentHTML("beforeend", `
      <span class="absolute -left-[3px] -top-[3px] size-[6px] bg-[#666]"></span>
      <span class="absolute left-[115px] -top-[3px] size-[6px] bg-[#666]"></span>
      <span class="absolute -right-[3px] -top-[3px] size-[6px] bg-[#666]"></span>
      <span class="absolute -left-[3px] top-[66px] size-[6px] bg-[#666]"></span>
      <span class="absolute -right-[3px] top-[66px] size-[6px] bg-[#666]"></span>
      <span class="absolute -left-[3px] -bottom-[3px] size-[6px] bg-[#666]"></span>
      <span class="absolute left-[115px] -bottom-[3px] size-[6px] bg-[#666]"></span>
      <span class="absolute -right-[3px] -bottom-[3px] size-[6px] bg-[#666]"></span>`);
  </script>
</body>

</html>
